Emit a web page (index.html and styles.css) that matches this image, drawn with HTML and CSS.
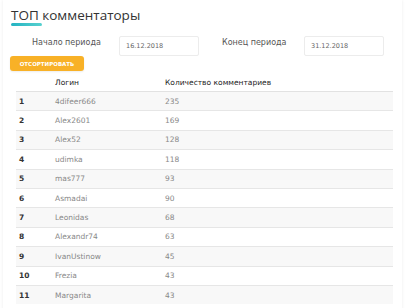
FILE: index.html
```html
<!DOCTYPE html>
<html lang="ru">
<head>
<meta charset="utf-8">
<link rel="stylesheet" href="styles.css">
</head>
<body>
<div class="page">
  <h1 class="title"><span class="accent">ТОП</span> комментаторы</h1>
  <div class="filters">
    <label class="label label-start">Начало периода</label>
    <div class="date">16.12.2018</div>
    <label class="label label-end">Конец периода</label>
    <div class="date">31.12.2018</div>
  </div>
  <button class="btn">Отсортировать</button>
  <table class="tbl">
    <thead>
      <tr><th class="c-n"></th><th class="c-l">Логин</th><th class="c-c">Количество комментариев</th></tr>
    </thead>
    <tbody>
      <tr><td class="c-n">1</td><td class="c-l">4difeer666</td><td class="c-c">235</td></tr>
      <tr><td class="c-n">2</td><td class="c-l">Alex2601</td><td class="c-c">169</td></tr>
      <tr><td class="c-n">3</td><td class="c-l">Alex52</td><td class="c-c">128</td></tr>
      <tr><td class="c-n">4</td><td class="c-l">udimka</td><td class="c-c">118</td></tr>
      <tr><td class="c-n">5</td><td class="c-l">mas777</td><td class="c-c">93</td></tr>
      <tr><td class="c-n">6</td><td class="c-l">Asmadai</td><td class="c-c">90</td></tr>
      <tr><td class="c-n">7</td><td class="c-l">Leonidas</td><td class="c-c">68</td></tr>
      <tr><td class="c-n">8</td><td class="c-l">Alexandr74</td><td class="c-c">63</td></tr>
      <tr><td class="c-n">9</td><td class="c-l">IvanUstinow</td><td class="c-c">45</td></tr>
      <tr><td class="c-n">10</td><td class="c-l">Frezia</td><td class="c-c">43</td></tr>
      <tr><td class="c-n">11</td><td class="c-l">Margarita</td><td class="c-c">43</td></tr>
    </tbody>
  </table>
</div>
</body>
</html>
```
FILE: styles.css
```css
html, body {
  margin: 0;
  padding: 0;
  background: #fff;
  overflow: hidden;
}
body {
  font-family: "DejaVu Sans", "Noto Sans", sans-serif;
  color: #555;
}
.page {
  width: 399px;
  height: 320px;
  margin-left: 3px;
  box-shadow: 0 0 3px rgba(0,0,0,0.08);
  padding: 5px 0 0 0;
  box-sizing: border-box;
}
.title {
  margin: 0 0 0 8px;
  font-family: "Open Sans", "DejaVu Sans", sans-serif;
  font-size: 13.5px;
  font-weight: 400;
  line-height: 20px;
  color: #333;
}
.accent {
  position: relative;
  display: inline-block;
}
.accent::after {
  content: "";
  position: absolute;
  left: 0;
  top: 18px;
  width: 31px;
  height: 3px;
  border-radius: 2px;
  background: linear-gradient(90deg, #23b3c2, #58d1cf);
}
.filters {
  display: flex;
  align-items: center;
  height: 20px;
  margin-top: 11px;
}
.label {
  font-size: 8px;
  color: #555;
  align-self: flex-start;
  margin-top: 2px;
}
.label-start { margin-left: 29px; width: 87px; }
.label-end { margin-left: 23px; width: 82px; }
.date {
  width: 80px;
  height: 20px;
  box-sizing: border-box;
  border: 1px solid #ececec;
  border-radius: 2px;
  font-size: 6.5px;
  color: #666;
  padding-left: 6px;
  display: flex;
  align-items: center;
}
.btn {
  display: block;
  margin: 0 0 0 7px;
  width: 74px;
  height: 15px;
  border: none;
  border-radius: 3px;
  background: #f8b127;
  color: #fff;
  font-family: inherit;
  font-size: 5.5px;
  font-weight: 700;
  text-transform: uppercase;
  padding: 0;
  box-shadow: 0 1px 2px rgba(0,0,0,0.08);
}
.tbl {
  margin-left: 13px;
  margin-top: 2px;
  width: 377px;
  border-collapse: collapse;
  font-size: 7.5px;
}
.tbl th {
  height: 18px;
  font-weight: 400;
  color: #222;
  text-align: left;
  padding: 0;
  border-bottom: 1px solid #e2e2e2;
}
.tbl td {
  height: 18.4px;
  padding: 0;
  border-top: 1px solid #e6e6e6;
  color: #888;
}
.tbl tbody tr:nth-child(odd) { background: #f8f8f8; }
.c-n { width: 39px; padding-left: 3px !important; box-sizing: border-box; }
.tbl td.c-n { color: #333; font-weight: 600; }
.c-l { width: 110px; }
```
